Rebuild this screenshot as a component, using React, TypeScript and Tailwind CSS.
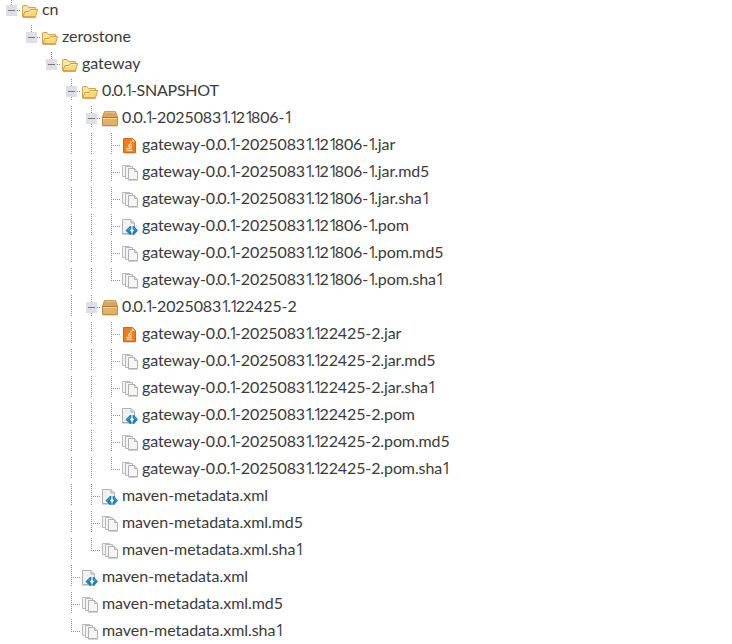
import React from "react";

type Icon = "folder" | "box" | "jar" | "file" | "xml";
// connector codes, one per depth: " " none, "|" guide, "t" tee, "l" elbow, "+" open branch, "-" open last branch
type Row = [string, Icon, string];

const rows: Row[] = [
  ["-", "folder", "cn"],
  [" -", "folder", "zerostone"],
  ["  -", "folder", "gateway"],
  ["   +", "folder", "0.0.1-SNAPSHOT"],
  ["   |+", "box", "0.0.1-20250831.121806-1"],
  ["   ||t", "jar", "gateway-0.0.1-20250831.121806-1.jar"],
  ["   ||t", "file", "gateway-0.0.1-20250831.121806-1.jar.md5"],
  ["   ||t", "file", "gateway-0.0.1-20250831.121806-1.jar.sha1"],
  ["   ||t", "xml", "gateway-0.0.1-20250831.121806-1.pom"],
  ["   ||t", "file", "gateway-0.0.1-20250831.121806-1.pom.md5"],
  ["   ||l", "file", "gateway-0.0.1-20250831.121806-1.pom.sha1"],
  ["   |+", "box", "0.0.1-20250831.122425-2"],
  ["   ||t", "jar", "gateway-0.0.1-20250831.122425-2.jar"],
  ["   ||t", "file", "gateway-0.0.1-20250831.122425-2.jar.md5"],
  ["   ||t", "file", "gateway-0.0.1-20250831.122425-2.jar.sha1"],
  ["   ||t", "xml", "gateway-0.0.1-20250831.122425-2.pom"],
  ["   ||t", "file", "gateway-0.0.1-20250831.122425-2.pom.md5"],
  ["   ||l", "file", "gateway-0.0.1-20250831.122425-2.pom.sha1"],
  ["   |t", "xml", "maven-metadata.xml"],
  ["   |t", "file", "maven-metadata.xml.md5"],
  ["   |l", "file", "maven-metadata.xml.sha1"],
  ["   t", "xml", "maven-metadata.xml"],
  ["   t", "file", "maven-metadata.xml.md5"],
  ["   l", "file", "maven-metadata.xml.sha1"],
];

function Connector({ code, last }: { code: string; last: boolean }) {
  const open = code === "+" || code === "-";
  const height = code === "l" || code === "-" ? 13 : 22;
  return (
    <svg className={`h-[27px] shrink-0 ${last ? "w-4" : "w-5"}`} shapeRendering="crispEdges">
      {code !== " " && <path d={`M5.5 0V${height}`} stroke="#8c8c8c" strokeDasharray="1 1" />}
      {last && <path d="M5 12.5H14" stroke="#8c8c8c" strokeDasharray="1 1" />}
      {open && (
        <>
          <rect y="7" width="11" height="11" fill="#dedfe4" />
          <path d="M2 12.5H9" stroke="#77787c" />
        </>
      )}
    </svg>
  );
}

function Glyph({ icon }: { icon: Icon }) {
  return (
    <svg viewBox="0 0 16 16" className="mt-[5px] h-4 w-4 shrink-0">
      {icon === "folder" && (
        <>
          <path d="M.5 13.5V3Q.5 2.5 1.5 2.5H5L6.5 4.5H13.5V7" fill="#fbe49c" stroke="#d5a24c" />
          <path d="M.7 14L3 8.5H7L8.5 6.5H15.5L13.5 14Z" fill="#fbd876" stroke="#d29a40" />
          <path d="M3.8 9.5H7.5L9 7.5H14.2" fill="none" stroke="#fff2c0" />
          <path d="M1 14.1H13.5" stroke="#c98d38" />
        </>
      )}
      {icon === "box" && (
        <>
          <path d="M.5 6L2.5 .7H13.5L15.5 6V14.5H.5Z" fill="#e2b168" stroke="#c08a42" />
          <path d="M1.4 5.5L3 1.5H13L14.6 5.5Z" fill="#d7a45c" />
          <path d="M3 1.7H13" stroke="#e9c188" />
          <path d="M1 6.5H15" stroke="#ad7632" />
          <path d="M1 7.5H15" stroke="#f7dba6" />
          <path d="M1 15.5H15" stroke="#dedede" />
        </>
      )}
      {icon === "jar" && (
        <>
          <path d="M1.5 .5H10.5L13.5 3.5V14.5H1.5Z" fill="#ef7d18" stroke="#dd6508" />
          <path d="M10 1L13 4H10Z" fill="#ffe0bd" />
          <path d="M8.8 3.5V5.5L6.8 7.5L7.5 9.5M9.8 6.5L8.8 8.5L9.2 10M4 10.5H9.5M4.5 12.5H10.5" fill="none" stroke="#fbd0a2" strokeWidth="1.4" />
          <path d="M2 15.5H14" stroke="#ddd" />
        </>
      )}
      {icon === "file" && (
        <>
          <path d="M.5 .5H7.5V11.5H.5Z" fill="#f4f4f4" stroke="#bababa" />
          <path d="M3.5 1.5H10.5V13.5H3.5Z" fill="#f4f4f4" stroke="#b6b6b6" />
          <path d="M6.5 3.5H12.5L15.5 6.5V14.5H6.5Z" fill="#f6f6f6" stroke="#b0b0b0" />
          <path d="M12.5 3.5V6.5H15.5" fill="#ddd" stroke="#b4b4b4" />
          <path d="M6 15.5H16" stroke="#d4d4d4" />
        </>
      )}
      {icon === "xml" && (
        <>
          <path d="M.5 .5H9L12.5 4V14.5H.5Z" fill="#f0f1f3" stroke="#b0b0b0" />
          <path d="M9 .5V4H12.5" fill="#ddd" stroke="#b0b0b0" />
          <path d="M0 15.5H12" stroke="#d4d4d4" />
          <path d="M3.5 11.5L8 7H9.3V9.9L7.8 11.5L9.3 13.1V16H8Z" fill="#1b7fb8" />
          <path d="M16 11.5L12 7H10.7V9.9L12.2 11.5L10.7 13.1V16H12Z" fill="#1b7fb8" />
          <path d="M8 9L5.7 11.5M12 9L14.3 11.5" stroke="#62b6e0" strokeWidth=".8" />
        </>
      )}
    </svg>
  );
}

// Narrow, footless ones and tight dots between figures
function Label({ text }: { text: string }) {
  const tracking = /^\D*$|^maven/.test(text) ? "tracking-[-0.04px]" : text.endsWith("SNAPSHOT") ? "tracking-[-0.25px]" : "tracking-[-0.11px]";
  return (
    <span className={`ml-1 leading-[22px] whitespace-nowrap ${tracking}`}>
      {text.split(/(1|(?<=\d)\.(?=\d))/).map((part, i) => {
        if (part === "1") return <span key={i} className="font-['Open_Sans',sans-serif] tracking-[-3.1px]">1</span>;
        if (part === "." && i % 2) return <span key={i} className="tracking-[-1.4px]">.</span>;
        return part;
      })}
    </span>
  );
}

export default function App() {
  return (
    <main className="h-[644px] w-[732px] overflow-hidden bg-white font-['Lato',sans-serif] text-[16px] text-[#3a3a3a]">
      <ul className="-mt-[2px] pl-[6px]">
        {rows.map(([codes, icon, label], i) => (
          <li key={i} className="flex h-[27px]">
            {codes.split("").map((code, d) => (
              <Connector key={d} code={code} last={d === codes.length - 1} />
            ))}
            <Glyph icon={icon} />
            <Label text={label} />
          </li>
        ))}
      </ul>
    </main>
  );
}
